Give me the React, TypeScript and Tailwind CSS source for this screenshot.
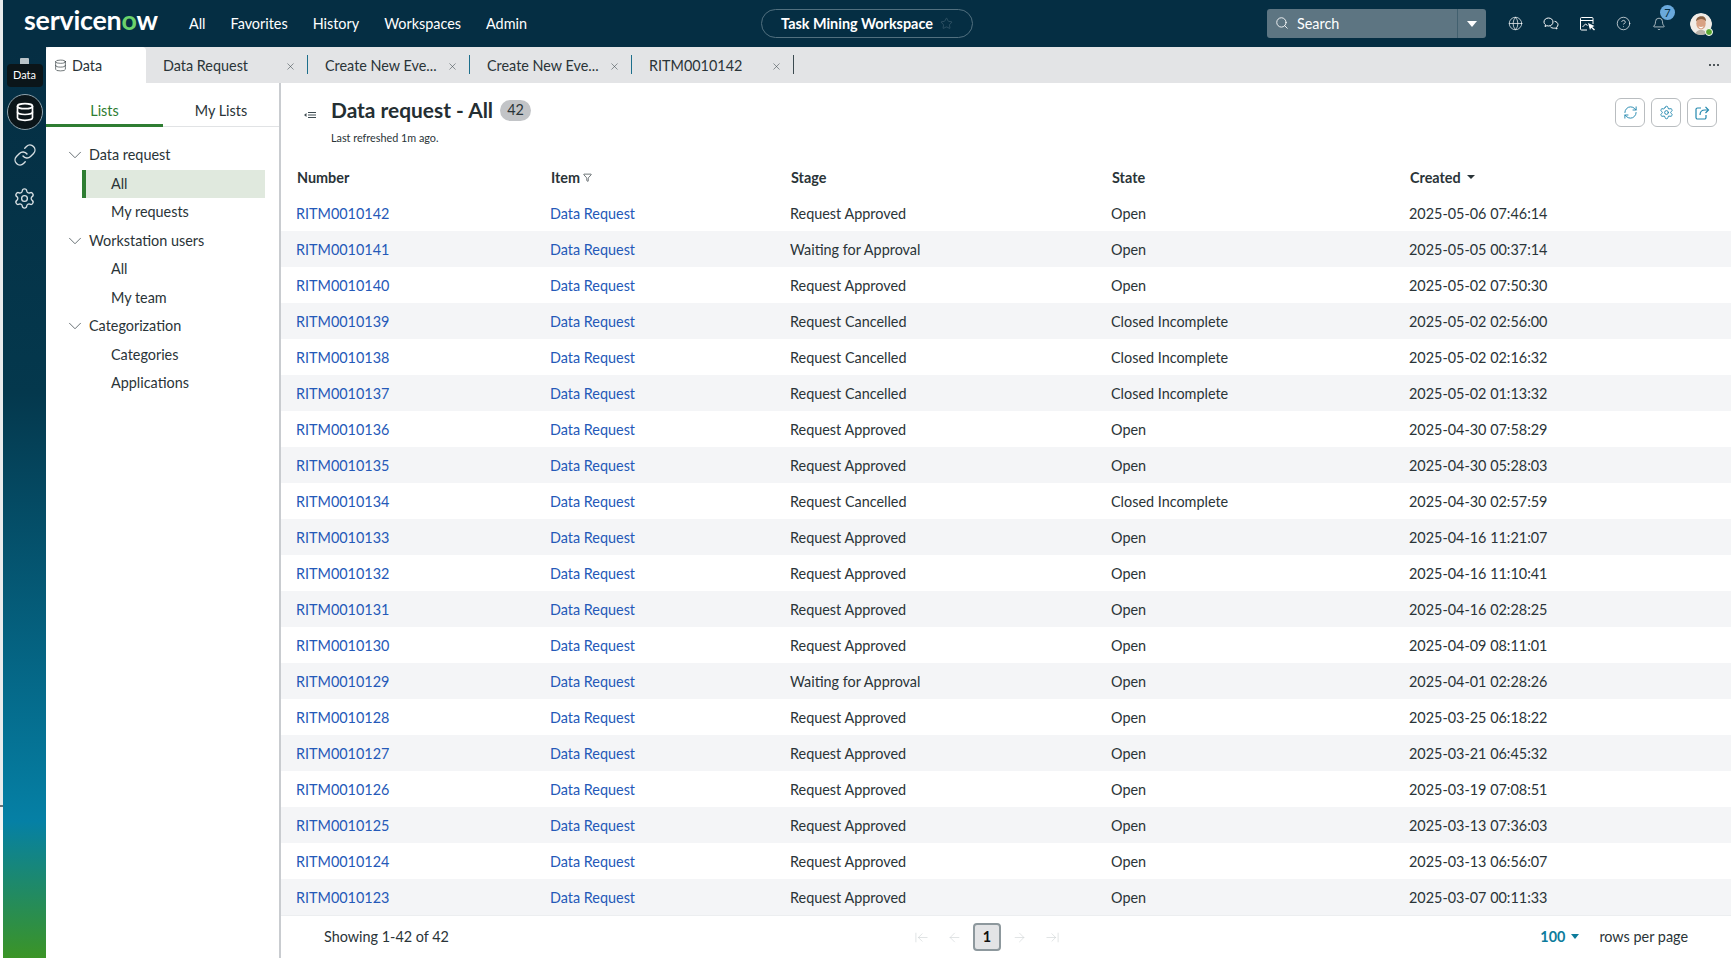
import {
  ArrowLeft,
  ArrowLeftToLine,
  ArrowRight,
  ArrowRightToLine,
  Bell,
  ChevronDown,
  CircleHelp,
  Database,
  Funnel,
  Globe,
  Link,
  RefreshCw,
  Search,
  Settings,
  Star,
  X,
} from "lucide-react";

const rows = [
  ["RITM0010142", "Request Approved", "Open", "2025-05-06 07:46:14"],
  ["RITM0010141", "Waiting for Approval", "Open", "2025-05-05 00:37:14"],
  ["RITM0010140", "Request Approved", "Open", "2025-05-02 07:50:30"],
  ["RITM0010139", "Request Cancelled", "Closed Incomplete", "2025-05-02 02:56:00"],
  ["RITM0010138", "Request Cancelled", "Closed Incomplete", "2025-05-02 02:16:32"],
  ["RITM0010137", "Request Cancelled", "Closed Incomplete", "2025-05-02 01:13:32"],
  ["RITM0010136", "Request Approved", "Open", "2025-04-30 07:58:29"],
  ["RITM0010135", "Request Approved", "Open", "2025-04-30 05:28:03"],
  ["RITM0010134", "Request Cancelled", "Closed Incomplete", "2025-04-30 02:57:59"],
  ["RITM0010133", "Request Approved", "Open", "2025-04-16 11:21:07"],
  ["RITM0010132", "Request Approved", "Open", "2025-04-16 11:10:41"],
  ["RITM0010131", "Request Approved", "Open", "2025-04-16 02:28:25"],
  ["RITM0010130", "Request Approved", "Open", "2025-04-09 08:11:01"],
  ["RITM0010129", "Waiting for Approval", "Open", "2025-04-01 02:28:26"],
  ["RITM0010128", "Request Approved", "Open", "2025-03-25 06:18:22"],
  ["RITM0010127", "Request Approved", "Open", "2025-03-21 06:45:32"],
  ["RITM0010126", "Request Approved", "Open", "2025-03-19 07:08:51"],
  ["RITM0010125", "Request Approved", "Open", "2025-03-13 07:36:03"],
  ["RITM0010124", "Request Approved", "Open", "2025-03-13 06:56:07"],
  ["RITM0010123", "Request Approved", "Open", "2025-03-07 00:11:33"],
];

const tree = [
  { label: "Data request", items: ["All", "My requests"] },
  { label: "Workstation users", items: ["All", "My team"] },
  { label: "Categorization", items: ["Categories", "Applications"] },
];

const tabs = [
  { label: "Data Request", divider: "bg-[#1c6f8c]" },
  { label: "Create New Eve...", divider: "bg-[#1c6f8c]" },
  { label: "Create New Eve...", divider: "bg-[#1c6f8c]" },
  { label: "RITM0010142", divider: "bg-[#3b4a50]" },
];

function ChatIcon() {
  return (
    <svg width="16" height="16" viewBox="0 0 16 16" fill="none" stroke="currentColor" strokeWidth="1">
      <path d="M1 6c0-2.3 2-4 4.500-4S10 3.700 10 6s-2 4-4.500 4c-.6 0-1.100-.1-1.600-.3L2 10.500l.5-1.800C1.500 8 1 7 1 6z" />
      <path d="M11.500 5.300C13.600 5.600 15 7 15 8.700c0 1-.5 1.900-1.400 2.500l.4 1.800-1.900-1c-.5.2-1 .2-1.500.2-1.300 0-2.500-.5-3.200-1.400" />
    </svg>
  );
}

function ScreenIcon() {
  return (
    <svg width="16" height="16" viewBox="0 0 16 16" fill="none" stroke="currentColor" strokeWidth="1">
      <path d="M8 14H2.500a1 1 0 0 1-1-1V2.500a1 1 0 0 1 1-1h10.500a1 1 0 0 1 1 1V8" />
      <path d="M1.500 4.500h12.500" />
      <path d="M3.500 11l3-3 2 1.500" />
      <path d="M9 7l2 7 1.200-2.200L15 14.500l1-1-2.700-2.500 2.200-1z" fill="#fff" stroke="none" />
    </svg>
  );
}

function ShareIcon() {
  return (
    <svg width="16" height="16" viewBox="0 0 16 16" fill="none" stroke="currentColor" strokeWidth="1.2">
      <path d="M7 3H3.500A1.500 1.500 0 0 0 2 4.500v8A1.500 1.500 0 0 0 3.500 14h7a1.500 1.500 0 0 0 1.500-1.500V10" />
      <path d="M6 10c0-3 2-5 5-5h3" />
      <path d="M11.500 1.800L14.500 5l-3 3" />
    </svg>
  );
}

function CollapseIcon() {
  return (
    <svg width="14" height="10" viewBox="0 0 14 10" fill="none" stroke="#3d4a50" strokeWidth="1">
      <path d="M5 2.500h8M5 5h8M5 7.500h8" />
      <path d="M3.500 3L1 5l2.500 2z" fill="#3d4a50" stroke="none" />
    </svg>
  );
}

function Avatar() {
  return (
    <div className="relative w-[22px] h-[22px]">
      <svg width="22" height="22" viewBox="0 0 22 22" className="rounded-full">
        <circle cx="11" cy="11" r="11" fill="#f1ece6" />
        <path d="M5 22c.5-3.500 3-5 6-5s5.500 1.500 6 5z" fill="#b9b2a8" />
        <ellipse cx="11" cy="10.500" rx="4.700" ry="6" fill="#d8a183" />
        <path d="M6 8.500C6 5 8.500 3.300 11.500 3.300c3 0 4.800 2 4.500 5.200-1-1.700-2.800-2.600-5-2.500-2 .1-3.800.8-5 2.500z" fill="#8a6142" />
        <path d="M8.500 13.200c1.500 1 3.500 1 5 0-.5 1.500-1.500 2-2.500 2s-2-.5-2.500-2z" fill="#fff" />
      </svg>
      <span className="absolute right-[-1px] bottom-[-1px] w-[8px] h-[8px] rounded-full bg-[#5aa832] border border-white" />
    </div>
  );
}

function TopBar() {
  return (
    <header className="h-[47px] shrink-0 bg-[#052e43] flex items-center text-white">
      <div className="w-[186px] shrink-0 pl-[21px] text-[26.8px] font-bold leading-none tracking-[-0.2px] pb-[6px]">
        servicen<span className="text-[#6bd36b]">o</span>w
      </div>
      <nav className="flex text-[14.4px] w-[572px] shrink-0 gap-[25px]">
        <span>All</span>
        <span>Favorites</span>
        <span>History</span>
        <span>Workspaces</span>
        <span>Admin</span>
      </nav>
      <div className="w-[212px] h-[29px] shrink-0 rounded-full border border-[#52707f] flex items-center justify-center gap-[7px] text-[14.4px] font-bold">
        Task Mining Workspace
        <Star size={13} strokeWidth={1} className="text-[#4d6b7a]" />
      </div>
      <div className="w-[294px] shrink-0" />
      <div className="w-[219px] h-[29px] shrink-0 rounded-[3px] bg-[#5d7582] flex items-center">
        <div className="flex-1 flex items-center gap-[8px] pl-[8px] text-[14.4px]">
          <Search size={14} strokeWidth={1.5} />
          Search
        </div>
        <div className="w-[29px] h-full border-l border-[#42606f] flex items-center justify-center">
          <span className="w-0 h-0 border-x-[5px] border-x-transparent border-t-[6px] border-t-white" />
        </div>
      </div>
      <div className="w-[11px] shrink-0" />
      <div className="flex items-center">
        <div className="w-[36px] flex justify-center">
          <Globe size={15} strokeWidth={1.1} />
        </div>
        <div className="w-[36px] flex justify-center">
          <ChatIcon />
        </div>
        <div className="w-[36px] flex justify-center">
          <ScreenIcon />
        </div>
        <div className="w-[36px] flex justify-center">
          <CircleHelp size={15} strokeWidth={1.1} />
        </div>
        <div className="relative w-[36px] flex justify-center">
          <Bell size={14} strokeWidth={1.1} />
          <span className="absolute left-[19px] top-[-12px] w-[15px] h-[15px] rounded-full bg-[#6aa9dc] text-[#052e43] text-[11px] leading-[15px] text-center">
            7
          </span>
        </div>
        <div className="w-[13px]" />
        <Avatar />
      </div>
    </header>
  );
}

function Rail() {
  return (
    <aside className="relative w-[43px] shrink-0 flex flex-col items-center bg-[linear-gradient(to_bottom,#052e43_0%,#04384d_38%,#0580a5_85%,#3b9426_100%)] text-[#d7dfe3]">
      <div className="h-[17px] pt-[11px]">
        <div className="w-[9px] h-[6px] rounded-t-[1px] bg-[#b9c3c8]" />
      </div>
      <div className="h-[23px] w-[36px] rounded-[4px] bg-[#0b1519] text-white text-[11px] flex items-center justify-center">
        Data
      </div>
      <div className="mt-[7px] w-[36px] h-[36px] rounded-full bg-[#0b1519] border border-[#8fa3ad] flex items-center justify-center text-white">
        <Database size={20} strokeWidth={2} />
      </div>
      <Link size={24} strokeWidth={1.4} className="mt-[13px]" />
      <Settings size={23} strokeWidth={1.4} className="mt-[20px]" />
    </aside>
  );
}

function TabBar() {
  return (
    <div className="h-[36px] shrink-0 bg-[#e3e4e6] flex items-center text-[14.4px] text-[#2a3438]">
      <div className="w-[100px] h-full bg-white rounded-t-[4px] flex items-center pl-[8px] pt-[1px] gap-[5px]">
        <Database size={13} strokeWidth={1.2} />
        Data
      </div>
      {tabs.map((tab, i) => (
        <div key={i} className="w-[162px] h-full flex items-center shrink-0 pl-[17px] pt-[1px] relative">
          <span>{tab.label}</span>
          <X size={11} strokeWidth={1.2} className="absolute right-[12px] top-[14px] text-[#3b464b]" />
          <span className={`absolute right-0 top-[8px] w-px h-[19px] ${tab.divider}`} />
        </div>
      ))}
      <div className="flex-1 flex justify-end pr-[12px] gap-[1.5px]">
        <span className="w-[2.5px] h-[2.5px] rounded-full bg-[#1f292d]" />
        <span className="w-[2.5px] h-[2.5px] rounded-full bg-[#1f292d]" />
        <span className="w-[2.5px] h-[2.5px] rounded-full bg-[#1f292d]" />
      </div>
    </div>
  );
}

function Sidebar() {
  return (
    <aside className="w-[235px] shrink-0 border-r-2 border-[#c9ccd0] text-[14.4px] text-[#2a3438]">
      <div className="flex h-[44px] border-b border-[#e1e3e5]">
        <div className="w-[117px] flex items-center justify-center pt-[14px] text-[#2e7d32] border-b-[3px] border-[#2e7d32] -mb-px">Lists</div>
        <div className="flex-1 flex items-center justify-center pt-[13px]">My Lists</div>
      </div>
      <div className="mt-[14px]">
        {tree.map((group) => (
          <div key={group.label}>
            <div className="h-[28.5px] flex items-center pl-[18px]">
              <ChevronDown size={22} strokeWidth={0.9} className="mr-[3px] text-[#4a555a]" />
              {group.label}
            </div>
            {group.items.map((item, i) => (
              <div
                key={item}
                className={
                  group.label === "Data request" && i === 0
                    ? "h-[28.5px] flex items-center ml-[36px] mr-[14px] pl-[25px] bg-[#e0e9de] border-l-[4px] border-[#2e7d32]"
                    : "h-[28.5px] flex items-center pl-[65px]"
                }
              >
                {item}
              </div>
            ))}
          </div>
        ))}
      </div>
    </aside>
  );
}

function ListHeader() {
  return (
    <div className="h-[77px] shrink-0 flex items-start pl-[22px] pr-[14px]">
      <div className="mt-[27px] w-[28px] shrink-0">
        <CollapseIcon />
      </div>
      <div className="mt-[15px] flex-1">
        <div className="flex items-center gap-[7px] h-[24px]">
          <h1 className="text-[20.9px] font-bold text-[#242e32]">Data request - All</h1>
          <span className="w-[31px] h-[21px] rounded-full bg-[#c2c4c7] text-[14.4px] flex items-center justify-center text-[#2a3438]">42</span>
        </div>
        <p className="mt-[8px] text-[10.8px] text-[#2a3438]">Last refreshed 1m ago.</p>
      </div>
      <div className="mt-[15px] flex gap-[6px] text-[#2288ae]">
        <button className="w-[30px] h-[29px] rounded-[6px] border border-[#b9bdc0] flex items-center justify-center">
          <RefreshCw size={15} strokeWidth={1.5} />
        </button>
        <button className="w-[30px] h-[29px] rounded-[6px] border border-[#b9bdc0] flex items-center justify-center">
          <Settings size={15} strokeWidth={1.5} />
        </button>
        <button className="w-[30px] h-[29px] rounded-[6px] border border-[#b9bdc0] flex items-center justify-center">
          <ShareIcon />
        </button>
      </div>
    </div>
  );
}

function DataTable() {
  return (
    <div className="text-[14.4px] text-[#2a3438]">
      <div className="h-[35px] grid grid-cols-[254px_240px_321px_298px_1fr] items-center pl-[16px] font-bold">
        <span>Number</span>
        <span className="flex items-center gap-[3px]">
          Item
          <Funnel size={9} strokeWidth={1.8} />
        </span>
        <span>Stage</span>
        <span>State</span>
        <span className="flex items-center gap-[6px]">
          Created
          <span className="w-0 h-0 border-x-[4px] border-x-transparent border-t-[4px] border-t-[#2a3438]" />
        </span>
      </div>
      {rows.map((row, i) => (
        <div
          key={row[0]}
          className={`h-[36px] grid grid-cols-[254px_240px_321px_298px_1fr] items-center pl-[15px] pt-[1px] ${i % 2 === 1 ? "bg-[#f4f5f7]" : "bg-white"}`}
        >
          <span className="text-[#2459b8]">{row[0]}</span>
          <span className="text-[#2459b8]">Data Request</span>
          <span>{row[1]}</span>
          <span>{row[2]}</span>
          <span>{row[3]}</span>
        </div>
      ))}
    </div>
  );
}

function Footer() {
  return (
    <div className="h-[43px] shrink-0 border-t border-[#eceef0] flex items-center text-[14.4px] text-[#2a3438] pl-[43px] pr-[43px]">
      <span className="w-[496px] shrink-0">Showing 1-42 of 42</span>
      <div className="w-[334px] shrink-0 flex items-center justify-center gap-[11px] text-[#cfd3d6]">
        <ArrowLeftToLine size={15} strokeWidth={1} className="mr-[7px]" />
        <ArrowLeft size={15} strokeWidth={1} />
        <span className="w-[28px] h-[28px] rounded-[4px] bg-[#e3e4e6] border-2 border-[#8d989d] text-[#111] font-bold flex items-center justify-center">1</span>
        <ArrowRight size={15} strokeWidth={1} />
        <ArrowRightToLine size={15} strokeWidth={1} className="ml-[7px]" />
      </div>
      <div className="flex-1 flex items-center justify-end">
        <span className="text-[#0d7c9c] font-bold">100</span>
        <span className="ml-[6px] w-0 h-0 border-x-[4px] border-x-transparent border-t-[5px] border-t-[#0d7c9c]" />
        <span className="ml-[20px]">rows per page</span>
      </div>
    </div>
  );
}

export default function App() {
  return (
    <div className="w-[1731px] h-[958px] overflow-hidden flex bg-white font-['Lato',sans-serif]">
      <div className="w-[3px] shrink-0 bg-[linear-gradient(to_bottom,#e9ebec_0%,#e9ebec_84%,#6b7378_84%,#6b7378_84.2%,#f3f3f3_84.2%,#f3f3f3_86.6%,#ffffff_86.6%)]" />
      <div className="flex-1 flex flex-col min-w-0">
        <TopBar />
        <div className="flex-1 flex min-h-0">
          <Rail />
          <div className="flex-1 flex flex-col min-w-0">
            <TabBar />
            <div className="flex-1 flex min-h-0">
              <Sidebar />
              <main className="flex-1 flex flex-col min-w-0">
                <ListHeader />
                <div className="flex-1 min-h-0 overflow-hidden">
                  <DataTable />
                </div>
                <Footer />
              </main>
            </div>
          </div>
        </div>
      </div>
    </div>
  );
}
